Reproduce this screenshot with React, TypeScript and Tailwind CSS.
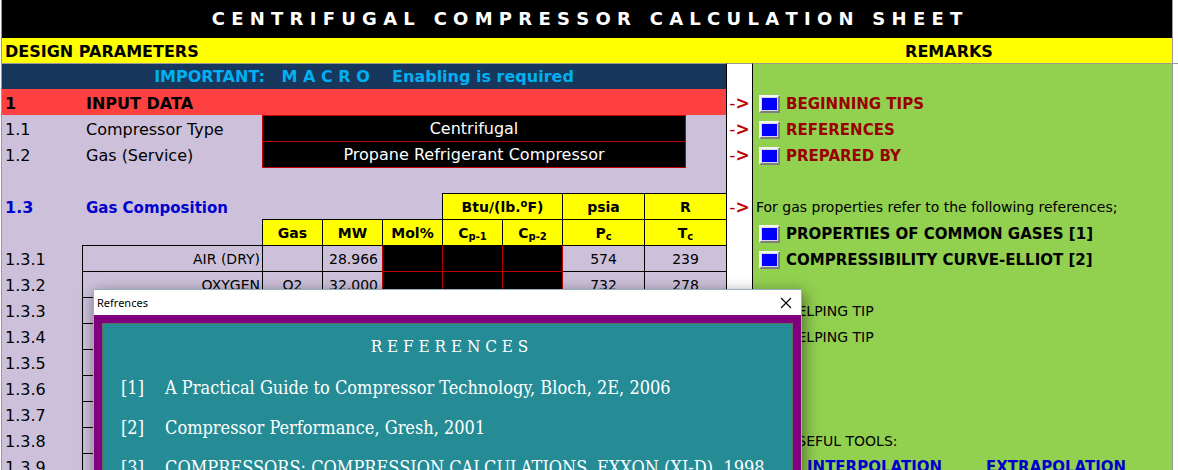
import type { ReactNode } from "react";

const SANS = "font-['DejaVu_Sans',Verdana,sans-serif]";
const SERIF = "font-['DejaVu_Serif_Condensed','DejaVu_Serif',Cambria,serif]";

type GasRow = { no: string; name?: string; gas?: string; mw?: string; pc?: string; tc?: string };

const gasRows: GasRow[] = [
  { no: "1.3.1", name: "AIR (DRY)", gas: "", mw: "28.966", pc: "574", tc: "239" },
  { no: "1.3.2", name: "OXYGEN", gas: "O2", mw: "32.000", pc: "732", tc: "278" },
  { no: "1.3.3" },
  { no: "1.3.4" },
  { no: "1.3.5" },
  { no: "1.3.6" },
  { no: "1.3.7" },
  { no: "1.3.8" },
  { no: "1.3.9" },
];

const references = [
  "A Practical Guide to Compressor Technology, Bloch, 2E, 2006",
  "Compressor Performance, Gresh, 2001",
  "COMPRESSORS: COMPRESSION CALCULATIONS, EXXON (XI-D), 1998",
];

function RowNumber({ children }: { children?: ReactNode }) {
  return <td className="border-l border-[#9a9a9a] p-0 pl-[3px] pt-1 text-base leading-5">{children}</td>;
}

function Arrow({ show = false }: { show?: boolean }) {
  return (
    <td className="border-l border-black bg-white p-0 text-[17px] leading-5 text-[#c00000]">
      {show && (
        <span className="flex items-center justify-center pt-[2px]">
          <span>-</span>
          <span className="font-bold">&gt;</span>
        </span>
      )}
    </td>
  );
}

function Remark({ children }: { children?: ReactNode }) {
  return (
    <td className="border-l border-l-black border-r border-r-[#9a9a9a] bg-[#92d050] p-0 text-sm leading-5 whitespace-nowrap">
      {children}
    </td>
  );
}

function RemarkButton({ label, className }: { label: string; className: string }) {
  return (
    <label className="flex items-center gap-[6px] pl-[6px] pt-[3px]">
      <button
        type="button"
        aria-label={label}
        className="h-[18px] w-[21px] border-2 border-t-[#f4f4f4] border-l-[#f4f4f4] border-r-[#808080] border-b-[#808080] bg-[#0000ff] outline-1 -outline-offset-3 outline-[#d8d8d8]"
      />
      <span className={className}>{label}</span>
    </label>
  );
}

function Head({ children, span }: { children: ReactNode; span?: number }) {
  return (
    <th colSpan={span} scope="col" className="border-l border-t border-black bg-[#ffff00] p-0 text-sm leading-4 font-bold">
      {children}
    </th>
  );
}

function InputCell({ label, first }: { label: string; first: boolean }) {
  return (
    <td className={`border-l border-t border-l-[#c00000] bg-black p-0 ${first ? "border-t-black" : "border-t-[#c00000]"}`}>
      <input aria-label={label} className="block h-5 w-full bg-black text-center text-sm text-white outline-none" />
    </td>
  );
}

function gasRemark(no: string) {
  switch (no) {
    case "1.3.1":
      return <RemarkButton label="COMPRESSIBILITY CURVE-ELLIOT [2]" className="text-[15px] font-bold text-black" />;
    case "1.3.3":
    case "1.3.4":
      return <span className="block pl-[34px] pt-[2px]">HELPING TIP</span>;
    case "1.3.8":
      return <span className="block pl-[34px] pt-[2px]">USEFUL TOOLS:</span>;
    case "1.3.9":
      return (
        <span className="flex gap-11 pl-[54px] pt-[2px] text-[15px] font-bold text-[#0000cc]">
          <a href="#interpolation">INTERPOLATION</a>
          <a href="#extrapolation">EXTRAPOLATION</a>
        </span>
      );
    default:
      return null;
  }
}

function ServiceRow({ no, id, label, value, remark }: { no: string; id: string; label: string; value: string; remark: string }) {
  return (
    <tr className="h-[26px]">
      <RowNumber>{no}</RowNumber>
      <td className="p-0 pl-1 pt-1 text-base leading-5">
        <label htmlFor={id}>{label}</label>
      </td>
      <td colSpan={7} className="p-0">
        <div className="mr-10 border-x border-t border-[#c00000]">
          <input
            id={id}
            defaultValue={value}
            className="block h-[25px] w-full bg-black text-center text-base text-white outline-none"
          />
        </div>
      </td>
      <Arrow show />
      <Remark>
        <RemarkButton label={remark} className="text-[15px] font-bold text-[#990000]" />
      </Remark>
    </tr>
  );
}

function Sheet() {
  return (
    <table className="w-full table-fixed border-separate border-spacing-0 bg-[#ccc0da] text-black">
      <colgroup>
        <col className="w-[81px]" />
        <col className="w-[180px]" />
        <col className="w-[60px]" />
        <col className="w-[60px]" />
        <col className="w-[60px]" />
        <col className="w-[60px]" />
        <col className="w-[60px]" />
        <col className="w-[82px]" />
        <col className="w-[82px]" />
        <col className="w-[26px]" />
        <col />
      </colgroup>
      <tbody>
        <tr className="h-[38px]">
          <th colSpan={11} className="border-x border-[#9a9a9a] bg-black p-0 text-lg leading-6 font-bold whitespace-pre text-white">
            {"C E N T R I F U G A L   C O M P R E S S O R   C A L C U L A T I O N   S H E E T"}
          </th>
        </tr>
        <tr className="h-[25px] bg-[#ffff00] text-base">
          <th colSpan={9} className="border-l border-[#9a9a9a] p-0 pl-[3px] pt-[2px] text-left leading-5">
            DESIGN PARAMETERS
          </th>
          <th colSpan={2} className="border-r border-[#9a9a9a] p-0 pt-[2px] leading-5">
            REMARKS
          </th>
        </tr>
        <tr className="h-[26px]">
          <th
            colSpan={9}
            className="border-l border-t border-[#9a9a9a] bg-[#17375d] p-0 text-base leading-5 whitespace-pre text-[#00b0f0]"
          >
            {"IMPORTANT:   M A C R O    Enabling is required"}
          </th>
          <td className="border-l border-t border-l-black border-t-[#9a9a9a] bg-white p-0" />
          <td className="border-x border-t border-l-black border-r-[#9a9a9a] border-t-[#9a9a9a] bg-[#92d050] p-0" />
        </tr>
        <tr className="h-[26px]">
          <th className="border-l border-[#9a9a9a] bg-[#ff4040] p-0 pl-[3px] pt-1 text-left text-base leading-5">1</th>
          <th colSpan={8} className="bg-[#ff4040] p-0 pl-1 pt-1 text-left text-base leading-5">
            INPUT DATA
          </th>
          <Arrow show />
          <Remark>
            <RemarkButton label="BEGINNING TIPS" className="text-[15px] font-bold text-[#990000]" />
          </Remark>
        </tr>
        <ServiceRow no="1.1" id="compressor-type" label="Compressor Type" value="Centrifugal" remark="REFERENCES" />
        <ServiceRow no="1.2" id="gas-service" label="Gas (Service)" value="Propane Refrigerant Compressor" remark="PREPARED BY" />
        <tr className="h-[26px]">
          <RowNumber />
          <td />
          <td colSpan={7} className="p-0 align-top">
            <div className="mr-10 border-t border-[#c00000]" />
          </td>
          <Arrow />
          <Remark />
        </tr>
        <tr className="h-[26px]">
          <RowNumber>
            <b className="text-[#0000cc]">1.3</b>
          </RowNumber>
          <th colSpan={4} className="p-0 pl-1 pt-1 text-left text-[15px] leading-5 text-[#0000cc]">
            Gas Composition
          </th>
          <Head span={2}>
            Btu/(lb.<sup className="text-[10px] leading-none">o</sup>F)
          </Head>
          <Head>psia</Head>
          <Head>R</Head>
          <Arrow show />
          <Remark>
            <span className="block pl-[3px] pt-[2px]">For gas properties refer to the following references;</span>
          </Remark>
        </tr>
        <tr className="h-[26px]">
          <RowNumber />
          <td />
          <Head>Gas</Head>
          <Head>MW</Head>
          <Head>Mol%</Head>
          <Head>
            C<sub className="text-[10px] leading-none">p-1</sub>
          </Head>
          <Head>
            C<sub className="text-[10px] leading-none">p-2</sub>
          </Head>
          <Head>
            P<sub className="text-[10px] leading-none">c</sub>
          </Head>
          <Head>
            T<sub className="text-[10px] leading-none">c</sub>
          </Head>
          <Arrow />
          <Remark>
            <RemarkButton label="PROPERTIES OF COMMON GASES [1]" className="text-[15px] font-bold text-black" />
          </Remark>
        </tr>
        {gasRows.map((row, i) => (
          <tr key={row.no} className="h-[26px] text-sm leading-5">
            <RowNumber>{row.no}</RowNumber>
            <td className="border-l border-t border-black p-0 pr-[2px] text-right">{row.name}</td>
            <td className="border-l border-t border-black p-0 text-center">{row.gas}</td>
            <td className="border-l border-t border-black p-0 pr-1 text-right">{row.mw}</td>
            <InputCell label={`${row.no} Mol%`} first={i === 0} />
            <InputCell label={`${row.no} Cp-1`} first={i === 0} />
            <InputCell label={`${row.no} Cp-2`} first={i === 0} />
            <td className="border-l border-t border-l-[#c00000] border-t-black p-0 text-center">{row.pc}</td>
            <td className="border-l border-t border-black p-0 text-center">{row.tc}</td>
            <Arrow />
            <Remark>{gasRemark(row.no)}</Remark>
          </tr>
        ))}
      </tbody>
    </table>
  );
}

function ReferencesDialog() {
  return (
    <section
      role="dialog"
      aria-labelledby="dialog-title"
      className="absolute top-[289px] left-[93px] w-[709px] border border-[#8fb4bd] bg-[#800080] shadow-[2px_4px_14px_rgba(0,0,0,0.5)]"
    >
      <header className="flex h-[25px] items-center justify-between bg-white pr-[9px] pl-[3px]">
        <h2 id="dialog-title" className="font-['Noto_Sans',sans-serif] text-[11px] leading-4 text-black">
          Refrences
        </h2>
        <button type="button" aria-label="Close" className="text-black">
          <svg width="12" height="12" viewBox="0 0 12 12" fill="none" stroke="currentColor" strokeWidth="1.1">
            <path d="M1 1l10 10M11 1L1 11" />
          </svg>
        </button>
      </header>
      <div className="p-2">
        <div className={`border border-[#5f6f5f] bg-[#258c96] px-[18px] pt-[10px] pb-8 text-white ${SERIF}`}>
          <h3 className="pl-1 text-center text-[17px] leading-6">R E F E R E N C E S</h3>
          <ol className="pt-[10px] text-lg leading-10">
            {references.map((text, i) => (
              <li key={text} className="flex whitespace-nowrap">
                <span className="w-11 shrink-0">[{i + 1}]</span>
                <span>{text}</span>
              </li>
            ))}
          </ol>
        </div>
      </div>
    </section>
  );
}

export default function App() {
  return (
    <main className={`relative flex h-screen items-start overflow-hidden bg-white pl-px ${SANS}`}>
      <div className="min-w-0 flex-1">
        <Sheet />
      </div>
      <div className="w-[5px] pt-[63px]">
        <div className="border-t border-[#9a9a9a]" />
      </div>
      <ReferencesDialog />
    </main>
  );
}
